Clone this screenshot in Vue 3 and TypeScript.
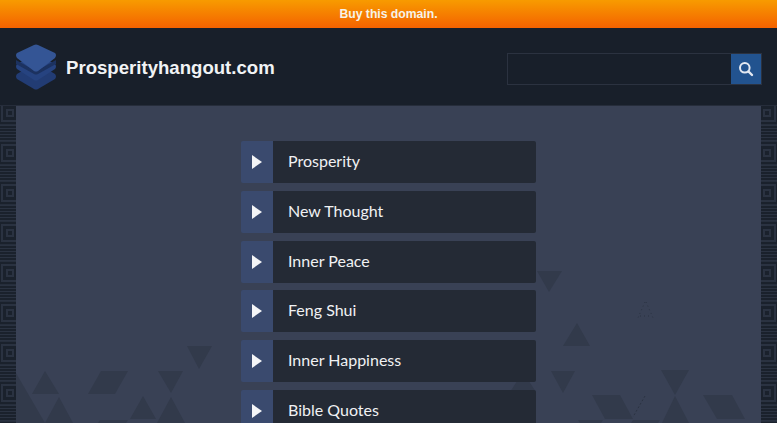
<script setup lang="ts">
const items: string[] = ["Prosperity", "New Thought", "Inner Peace", "Feng Shui", "Inner Happiness", "Bible Quotes"];

// backdrop shapes, in page coordinates (the svg viewBox starts at the panel's corner)
const shapes: string[] = [
  "187,346 212,346 199,369",
  "45,371 32,394 59,394",
  "16,373 45,423 16,423",
  "59,397 45,423 73,423",
  "101,371 128,371 115,394 88,394",
  "158,371 183,371 171,393",
  "143,396 130,419 156,419",
  "171,397 157,423 185,423",
  "100,420 128,420 126,423 98,423",
  "537,271 562,271 549,292",
  "577,323 563,346 590,346",
  "551,371 575,371 563,393",
  "592,395 620,395 633,419 605,419",
  "661,370 689,370 675,395",
  "675,396 662,423 689,423",
  "703,395 732,395 745,419 717,419",
  "578,420 603,420 601,423 580,423",
  "633,420 660,420 658,423 631,423",
  "523,372 510,392 536,392",
];

const stripes = "M0 1.500H16M0 4.500H16M0 7.500H16M0 32.500H16M0 35.500H16M0 38.500H16";
</script>

<template>
  <div class="page">
    <a class="buy" href="#">Buy this domain.</a>
    <header class="top">
      <div class="brand">
        <svg class="logo" width="42" height="46" viewBox="0 0 42 46">
          <path d="M19 20 Q21 19 23 20 L40 30 Q42 32.500 40 35 L23 45 Q21 46 19 45 L2 35 Q0 32.500 2 30 Z" fill="#223c74" />
          <path d="M19 11 Q21 10 23 11 L40 20 Q42 22.500 40 25 L23 36 Q21 37 19 36 L2 25 Q0 22.500 2 20 Z" fill="#264380" />
          <path d="M19 26 Q21 27 23 26 L41 16 L41 20 L23 30 Q21 31 19 30 L1 20 L1 16 Z" fill="#1c3260" />
          <path d="M19 1 Q21 0 23 1 L40 9 Q42 11 40 14 L23 27 Q21 28 19 27 L2 14 Q0 11 2 9 Z" fill="#345595" />
        </svg>
        <span class="name">Prosperityhangout.com</span>
      </div>
      <form class="search" @submit.prevent>
        <input class="field" type="text" />
        <button class="go" type="submit" aria-label="Search">
          <svg width="16" height="16" viewBox="0 0 16 16">
            <circle cx="6.800" cy="6.800" r="4.800" fill="none" stroke="#e4e9f2" stroke-width="2" />
            <path d="M10.500 10.500 L14 14" stroke="#e4e9f2" stroke-width="2.400" stroke-linecap="round" />
          </svg>
        </button>
      </form>
    </header>
    <main class="body">
      <svg class="side" width="16" height="317">
        <defs>
          <pattern id="tile-l" width="16" height="40" patternUnits="userSpaceOnUse" y="-13">
            <rect width="16" height="40" fill="#1a212c" />
            <path :d="stripes" stroke="#2a3241" />
            <rect x="-2" y="8" width="24" height="24" fill="none" stroke="#2a3241" stroke-width="1.500" />
            <rect x="2" y="12" width="16" height="16" fill="none" stroke="#2a3241" stroke-width="2" />
            <rect x="6" y="16" width="8" height="8" fill="#2a3241" />
            <rect x="8" y="18" width="4" height="4" fill="#1a212c" />
          </pattern>
        </defs>
        <rect width="16" height="317" fill="url(#tile-l)" />
      </svg>
      <section class="panel">
        <svg class="backdrop" viewBox="16 106 745 317" width="745" height="317">
          <polygon v-for="pts in shapes" :key="pts" :points="pts" fill="#323a4b" />
          <path d="M645 396 L633 417" stroke="#2b3342" stroke-dasharray="2 2" fill="none" />
          <path d="M645 302 L637 320 M646 302 L654 320 M640 316 H650" stroke="#2b3342" stroke-dasharray="1 3" fill="none" />
        </svg>
        <ul class="menu">
          <li v-for="item in items" :key="item" class="row">
            <span class="arrow">
              <svg width="10" height="14" viewBox="0 0 10 14"><path d="M0 0 L10 7 L0 14 Z" fill="#f4f5f7" /></svg>
            </span>
            <a class="label" href="#">{{ item }}</a>
          </li>
        </ul>
      </section>
      <svg class="side" width="16" height="317">
        <defs>
          <pattern id="tile-r" width="16" height="40" patternUnits="userSpaceOnUse" y="-13">
            <rect width="16" height="40" fill="#1a212c" />
            <path :d="stripes" stroke="#2a3241" />
            <rect x="-6" y="8" width="24" height="24" fill="none" stroke="#2a3241" stroke-width="1.500" />
            <rect x="-2" y="12" width="16" height="16" fill="none" stroke="#2a3241" stroke-width="2" />
            <rect x="2" y="16" width="8" height="8" fill="#2a3241" />
            <rect x="4" y="18" width="4" height="4" fill="#1a212c" />
          </pattern>
        </defs>
        <rect width="16" height="317" fill="url(#tile-r)" />
      </svg>
    </main>
  </div>
</template>

<style>
html,
body {
  margin: 0;
  overflow: hidden;
  background: #181f2a;
}
</style>

<style scoped>
.page {
  height: 100vh;
  display: flex;
  flex-direction: column;
  overflow: hidden;
}

.buy {
  flex: none;
  height: 28px;
  text-align: center;
  font: bold 12.200px/28px "Liberation Sans", Arial, sans-serif;
  color: #f7f3e8;
  text-decoration: none;
  background: linear-gradient(#f89b00, #f46200);
}

.top {
  flex: none;
  height: 77px;
  border-bottom: 1px solid #262d3b;
  background: #181f2a;
  display: flex;
  align-items: center;
  justify-content: space-between;
  padding: 0 15px;
}

.brand {
  display: flex;
  align-items: center;
  gap: 9px;
  margin-top: 1px;
}

.logo {
  display: block;
}

.name {
  font: bold 18.600px "Liberation Sans", Arial, sans-serif;
  color: #f1f3f5;
  margin-top: 1px;
}

.search {
  display: flex;
  height: 32px;
  width: 255px;
  margin-top: 4px;
}

.field {
  flex: 1;
  min-width: 0;
  box-sizing: border-box;
  background: #181f2a;
  border: 1px solid #2b3240;
  border-right: 0;
  outline: none;
  padding: 0 8px;
}

.go {
  flex: none;
  width: 31px;
  padding: 0;
  border: 1px solid #2b3240;
  border-left: 0;
  background: #22538f;
  display: flex;
  align-items: center;
  justify-content: center;
}

.body {
  flex: 1;
  display: flex;
  min-height: 0;
}

.side {
  flex: none;
  display: block;
}

.panel {
  position: relative;
  flex: 1;
  background: #394155;
  overflow: hidden;
}

.backdrop {
  position: absolute;
  left: 0;
  top: 0;
}

.menu {
  position: relative;
  list-style: none;
  margin: 0;
  padding: 35px 0 0 225px;
  width: 295px;
  display: flex;
  flex-direction: column;
  gap: 7.750px;
}

.row {
  flex: none;
  height: 42px;
  display: flex;
  border-radius: 2px;
  overflow: hidden;
}

.arrow {
  flex: none;
  width: 32px;
  background: #3a4a6e;
  display: flex;
  align-items: center;
  justify-content: center;
}

.label {
  flex: 1;
  background: #242a35;
  color: #f0f1f3;
  font: 16px/40px Lato, "Noto Sans", sans-serif;
  padding-left: 15px;
  text-decoration: none;
}
</style>
